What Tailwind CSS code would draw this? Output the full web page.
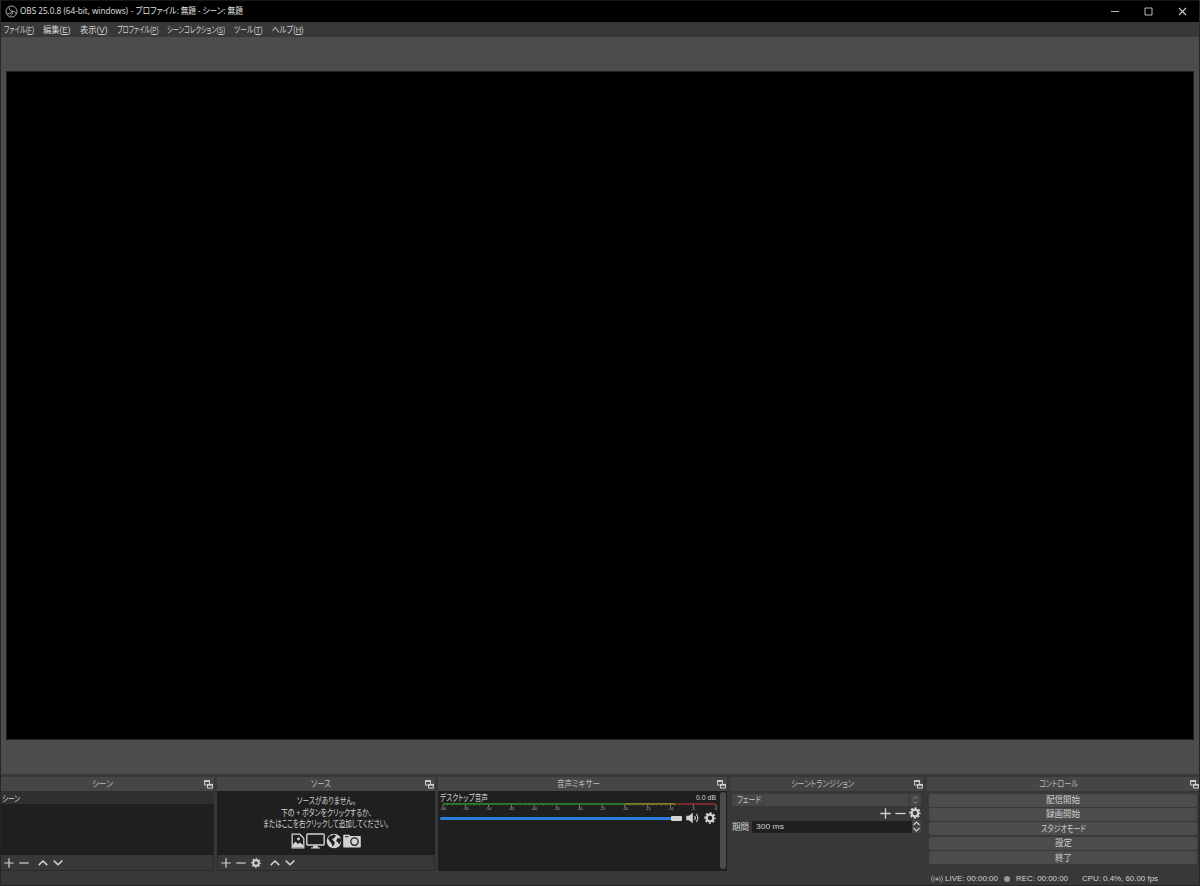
<!DOCTYPE html>
<html lang="ja">
<head>
  <meta charset="UTF-8">
  <meta name="viewport" content="width=device-width, initial-scale=1.0">
  <title>OBS 25.0.8</title>
  <script src="https://cdn.jsdelivr.net/npm/@tailwindcss/browser@4"></script>
  <style>
    /* Labels are squeezed to their UI width by the script below */
    [data-w] {
      display: inline-block;
      flex-shrink: 0;
      white-space: nowrap;
      transform-origin: 0 50%;
      font-feature-settings: "palt";
    }
  </style>
</head>
<body class="w-[1200px] h-[886px] overflow-hidden bg-[#383838] text-[#d2d2d2] text-[9px] leading-[12px] font-['Liberation_Sans','Noto_Sans_CJK_JP',sans-serif]">

  <!-- Shared icons -->
  <svg class="hidden">
    <symbol id="plus" viewBox="0 0 10 10"><path d="M5 .3v9.4M.3 5h9.4" fill="none" stroke="currentColor" stroke-width="1.2"/></symbol>
    <symbol id="minus" viewBox="0 0 10 10"><path d="M.3 5h9.4" fill="none" stroke="currentColor" stroke-width="1.2"/></symbol>
    <symbol id="up" viewBox="0 0 10 10"><path d="M.7 7.1 5 3l4.3 4.1" fill="none" stroke="currentColor" stroke-width="1.5"/></symbol>
    <symbol id="down" viewBox="0 0 10 10"><path d="M.7 2.6 5 6.7l4.3-4.1" fill="none" stroke="currentColor" stroke-width="1.5"/></symbol>
    <symbol id="gear" viewBox="0 0 24 24">
      <circle cx="12" cy="12" r="6.6" fill="none" stroke="currentColor" stroke-width="4.4"/>
      <circle cx="12" cy="12" r="9.7" fill="none" stroke="currentColor" stroke-width="3.6" stroke-dasharray="4.2 3.418" stroke-dashoffset="2.1"/>
    </symbol>
    <symbol id="float" viewBox="0 0 9 9">
      <path d="M5.500 3.900V.9H.6v4.200h2.200" fill="none" stroke="currentColor" stroke-width="1"/>
      <path d="M.1.2H6v1.700H.1z" fill="currentColor"/>
      <path d="M3.500 4.500h4.900v3.600H3.500z" fill="none" stroke="currentColor" stroke-width="1"/>
      <path d="M3 3.900h5.900v1.800H3z" fill="currentColor"/>
    </symbol>
  </svg>

  <div class="w-full h-full flex flex-col border-x border-b border-[#262626]">

    <!-- Title bar -->
    <header class="h-[22px] shrink-0 bg-black border-t border-[#161616] flex items-center pl-[4px] text-[#e0e0e0]">
      <svg class="w-[13px] h-[13px] mr-[2px]" viewBox="0 0 26 26" fill="none" stroke="#c8c8c8" stroke-width="1.7">
        <circle cx="13" cy="13" r="11"/>
        <path d="M8.500 5c-.5 4 1.500 7 5.500 7.500 4-.8 7.500 1.500 8 5.500M14 12.500c-1.500 4-5 6.500-9.500 4.500M14 12.500c1.500 3 .5 6.500-3 8.500"/>
      </svg>
      <div class="flex gap-[3px] -mt-px font-['Open_Sans','Noto_Sans_CJK_JP',sans-serif]">
        <span data-w="108">OBS 25.0.8 (64-bit, windows)</span>
        <span data-w="112">- プロファイル: 無題 - シーン: 無題</span>
      </div>
      <div class="ml-auto flex items-center gap-[25px] pr-[12px]">
        <svg class="w-[8px] h-[9px]" viewBox="0 0 8 9"><path d="M0 4.500h8" stroke="#bbb"/></svg>
        <svg class="w-[9px] h-[9px]" viewBox="0 0 9 9"><path d="M1 1h7v7H1z" fill="none" stroke="#bbb"/></svg>
        <svg class="w-[9px] h-[9px]" viewBox="0 0 9 9"><path d="m1 1 7 7M8 1 1 8" stroke="#ccc" stroke-width="1.100"/></svg>
      </div>
    </header>

    <!-- Menu -->
    <nav class="h-[15px] shrink-0 flex items-center gap-[9.200px] pl-[3px]">
      <span data-w="30">ファイル(<u>F</u>)</span>
      <span data-w="27.500">編集(<u>E</u>)</span>
      <span data-w="27.500">表示(<u>V</u>)</span>
      <span data-w="41.500">プロファイル(<u>P</u>)</span>
      <span data-w="58">シーンコレクション(<u>S</u>)</span>
      <span data-w="28.500">ツール(<u>T</u>)</span>
      <span data-w="31.500">ヘルプ(<u>H</u>)</span>
    </nav>

    <!-- Preview -->
    <main class="h-[737px] shrink-0 bg-[#4c4c4c] pt-[34px] px-[5px]">
      <div class="h-[669px] bg-black border border-[#202020]"></div>
    </main>

    <!-- Docks -->
    <div class="flex h-[97px] shrink-0 pt-[3px]">

      <!-- Scenes -->
      <section class="w-[213px] mr-[3px] flex flex-col">
        <div class="h-[14px] bg-[#464646] flex items-center justify-end">
          <span data-w="21" class="text-[#bdbdbd]">シーン</span>
          <svg class="w-[9px] h-[9px] ml-[91px] mr-[1px]"><use href="#float"/></svg>
        </div>
        <div class="h-[64px] bg-[#1f1f1f]">
          <div class="h-[13px] bg-[#303030] pl-[1px] pt-[2px]"><span data-w="18">シーン</span></div>
        </div>
        <div class="h-[16px] border-b border-r border-[#2b2b2b] flex items-center pl-[3px]">
          <svg class="w-[10px] h-[10px] mr-[5px]"><use href="#plus"/></svg>
          <svg class="w-[10px] h-[10px] mr-[4px]"><use href="#minus"/></svg>
          <div class="w-px h-[11px] bg-[#303030] mr-[4px]"></div>
          <svg class="w-[10px] h-[10px] mr-[5px]"><use href="#up"/></svg>
          <svg class="w-[10px] h-[10px]"><use href="#down"/></svg>
        </div>
      </section>

      <!-- Sources -->
      <section class="w-[218px] mr-[3px] flex flex-col">
        <div class="h-[14px] bg-[#464646] flex items-center justify-end">
          <span data-w="20" class="text-[#bdbdbd]">ソース</span>
          <svg class="w-[9px] h-[9px] ml-[94px] mr-[1px]"><use href="#float"/></svg>
        </div>
        <div class="h-[64px] bg-[#1f1f1f] flex flex-col items-center pt-[5px] leading-[11.500px]">
          <span data-w="59">ソースがありません。</span>
          <span data-w="91">下の + ボタンをクリックするか、</span>
          <span data-w="126">またはここを右クリックして追加してください。</span>
          <div class="flex items-center gap-[1px] mt-[2px]">
            <svg class="w-[14px] h-[16px]" viewBox="0 0 14 16"><path d="M1.200 1.200h7.600l4 4v9.600H1.200z" fill="none" stroke="currentColor" stroke-width="1.300"/><circle cx="7.500" cy="6" r="1.400" fill="currentColor"/><path d="M1.500 14v-2l3-3.500 2.500 2.500 2-1.500 3.500 3v1.500z" fill="currentColor"/></svg>
            <svg class="w-[19px] h-[16px]" viewBox="0 0 19 16"><rect x=".8" y="1" width="17.400" height="11" rx="1" fill="none" stroke="currentColor" stroke-width="1.400"/><path d="M7.500 12.500h4l.7 2h1.800v1H5v-1h1.800z" fill="currentColor"/></svg>
            <svg class="w-[16px] h-[16px]" viewBox="0 0 16 16"><circle cx="8" cy="8" r="7.300" fill="currentColor"/><path d="M7.500 1.200 10 2.500 9 4 7.500 5.500 6 6l1 1.500 1.800 1.500-.6 2.500-1.500 2.500-1.200-3.500L3.500 8 2 5.500 4 2.500l2 .3zM11 5.500l3.500-.5.7 3-2 3.500-1.500-2.500-1.500-.8z" fill="#1f1f1f"/></svg>
            <svg class="w-[18px] h-[16px]" viewBox="0 0 18 16"><path d="M1 1.800h5.500l.6 1.200H17a.8.8 0 0 1 .8.8v10a.8.8 0 0 1-.8.800H1a.8.800 0 0 1-.8-.8V2.600A.8.800 0 0 1 1 1.800z" fill="currentColor"/><path d="M2 3.700h3.500" stroke="#1f1f1f"/><circle cx="11.500" cy="8.600" r="3.700" fill="none" stroke="#1f1f1f" stroke-width="1.300"/></svg>
          </div>
        </div>
        <div class="h-[16px] border-b border-x border-[#2b2b2b] flex items-center pl-[3px]">
          <svg class="w-[10px] h-[10px] mr-[5px]"><use href="#plus"/></svg>
          <svg class="w-[10px] h-[10px] mr-[5px]"><use href="#minus"/></svg>
          <svg class="w-[10px] h-[10px] mr-[4px]"><use href="#gear"/></svg>
          <div class="w-px h-[11px] bg-[#303030] mr-[4px]"></div>
          <svg class="w-[10px] h-[10px] mr-[5px]"><use href="#up"/></svg>
          <svg class="w-[10px] h-[10px]"><use href="#down"/></svg>
        </div>
      </section>

      <!-- Audio mixer -->
      <section class="w-[289px] mr-[3px] flex flex-col">
        <div class="h-[14px] bg-[#464646] flex items-center justify-end">
          <span data-w="43" class="text-[#bdbdbd]">音声ミキサー</span>
          <svg class="w-[9px] h-[9px] ml-[117px] mr-[1px]"><use href="#float"/></svg>
        </div>
        <div class="h-[80px] bg-[#1f1f1f] flex justify-between pl-[2px] pr-[1px] pt-[1px]">
          <div class="w-[277px]">
            <div class="flex justify-between items-center h-[11px] pr-px">
              <span data-w="48">デスクトップ音声</span>
              <span data-w="20" class="text-[8px]">0.0 dB</span>
            </div>
            <svg id="meter" class="block w-[277px] h-[9px] overflow-visible" viewBox="0 0 277 9">
              <rect x="3" y="0" width="182" height="1.800" fill="#2c7d2c"/>
              <rect x="185" y="0" width="50" height="1.800" fill="#7d7d2c"/>
              <rect x="235" y="0" width="41" height="1.800" fill="#7d2c2c"/>
            </svg>
            <div class="flex items-center h-[12px]">
              <div class="w-[231px] h-[3px] bg-[#2a7fdb] rounded-l-sm"></div>
              <div class="w-[11px] h-[5px] rounded-[1px] bg-[#d2d2d2]"></div>
              <svg class="w-[14px] h-[12px] ml-[4px]" viewBox="0 0 14 12"><path d="M.3 3.800h2.700L6.800.8v10.400L3 8.200H.3z" fill="currentColor"/><path d="M8.500 4a3 3 0 0 1 0 4M10.300 2.200a5.500 5.500 0 0 1 0 7.600" fill="none" stroke="currentColor" stroke-width="1.100"/></svg>
              <svg class="w-[12px] h-[12px] ml-[4px]"><use href="#gear"/></svg>
            </div>
          </div>
          <div class="w-[6px] h-[77px] rounded-full bg-[#4c4c4c]"></div>
        </div>
      </section>

      <!-- Scene transitions -->
      <section class="w-[193px] mr-[4px] flex flex-col">
        <div class="h-[14px] bg-[#424242] flex items-center justify-end">
          <span data-w="63" class="text-[#bdbdbd]">シーントランジション</span>
          <svg class="w-[9px] h-[9px] ml-[60px]"><use href="#float"/></svg>
        </div>
        <div class="pl-[2px] pr-[2px] pt-[3px] flex flex-col">
          <div class="h-[12px] rounded-[2px] bg-[#474747] flex items-center pl-[5px]">
            <span data-w="24" class="text-[#c4c4c4]">フェード</span>
            <svg class="w-[12px] h-[12px] ml-auto" viewBox="0 0 12 12"><path d="M.5 0v12" stroke="#383838"/><path d="m4.500 4.500 1.900-1.700 1.900 1.700M4.500 7.500l1.900 1.700 1.900-1.700" fill="none" stroke="#999" stroke-width=".9"/></svg>
          </div>
          <div class="h-[14px] flex items-center justify-end">
            <svg class="w-[11px] h-[11px] mr-[4px]"><use href="#plus"/></svg>
            <svg class="w-[11px] h-[11px] mr-[3px]"><use href="#minus"/></svg>
            <svg class="w-[12px] h-[12px]"><use href="#gear"/></svg>
          </div>
          <div class="h-[13px] flex items-center">
            <span data-w="17">期間</span>
            <div class="ml-[3px] h-[12px] flex-1 bg-[#1f1f1f] rounded-l-[2px] pl-[4px] flex items-center text-[8px]"><span data-w="28">300 ms</span></div>
            <svg class="w-[9px] h-[13px] bg-[#464646] rounded-r-[2px]" viewBox="0 0 9 13"><path d="m1.500 5 3-3 3 3M1.500 8l3 3 3-3" fill="none" stroke="currentColor" stroke-width="1.100"/></svg>
          </div>
        </div>
      </section>

      <!-- Controls -->
      <section class="w-[272px] flex flex-col">
        <div class="h-[14px] bg-[#464646] flex items-center justify-end">
          <span data-w="39" class="text-[#bdbdbd]">コントロール</span>
          <svg class="w-[9px] h-[9px] ml-[112px]"><use href="#float"/></svg>
        </div>
        <div class="flex flex-col gap-[1.400px] pt-[2.500px] pl-[2px] pr-[2px] text-[#cfcfcf]">
          <button class="h-[13px] rounded-[2px] bg-[#4c4c4c] flex items-center justify-center"><span data-w="34">配信開始</span></button>
          <button class="h-[13px] rounded-[2px] bg-[#4c4c4c] flex items-center justify-center"><span data-w="34">録画開始</span></button>
          <button class="h-[13px] rounded-[2px] bg-[#4c4c4c] flex items-center justify-center"><span data-w="45">スタジオモード</span></button>
          <button class="h-[13px] rounded-[2px] bg-[#4c4c4c] flex items-center justify-center"><span data-w="17">設定</span></button>
          <button class="h-[13px] rounded-[2px] bg-[#4c4c4c] flex items-center justify-center"><span data-w="17">終了</span></button>
        </div>
      </section>
    </div>

    <!-- Status bar -->
    <footer class="flex-1 flex items-center pl-[930px] pt-[1px] text-[8px]">
      <svg class="w-[12px] h-[8px] mr-[2px] text-[#999]" viewBox="0 0 12 8"><circle cx="6" cy="4" r="1.600" fill="currentColor"/><path d="M3.800 1.800a3 3 0 0 0 0 4.400M8.200 1.800a3 3 0 0 1 0 4.400M2 .5a5 5 0 0 0 0 7M10 .5a5 5 0 0 1 0 7" fill="none" stroke="currentColor" stroke-width="1"/></svg>
      <span data-w="53">LIVE: 00:00:00</span>
      <div class="w-[6px] h-[6px] rounded-full bg-[#999] ml-[6px] mr-[6px]"></div>
      <span data-w="52">REC: 00:00:00</span>
      <div class="w-[14px]"></div>
      <span data-w="76">CPU: 0.4%, 60.00 fps</span>
    </footer>
  </div>

  <script>
    // Runs again whenever a label's own width changes
    const fit = new ResizeObserver((entries) => {
      for (const { target, contentRect } of entries) {
        if (!contentRect.width) continue;
        const w = parseFloat(target.dataset.w);
        target.style.transform = `scaleX(${w / contentRect.width})`;
        target.style.marginRight = `${w - contentRect.width}px`;
      }
    });
    document.querySelectorAll("[data-w]").forEach((el) => fit.observe(el));

    // dB scale under the meter
    const meter = document.getElementById("meter");
    let scale = "";
    for (let db = 0; db <= 60; db++) {
      const x = 276 - db * 4.55;
      const color = db < 9 ? "#7d2c2c" : db <= 20 ? "#7d7d2c" : "#2c7d2c";
      const major = db % 5 === 0;
      scale += `<rect x="${x - 0.4}" y="1.800" width=".8" height="${major ? 2 : 1}" fill="${major ? "#aaa" : color}"/>`;
      if (major) scale += `<text x="${x}" y="6.500" font-size="4" text-anchor="middle" fill="#b4b4b4">${db ? -db : 0}</text>`;
    }
    meter.innerHTML += scale;
  </script>
</body>
</html>
